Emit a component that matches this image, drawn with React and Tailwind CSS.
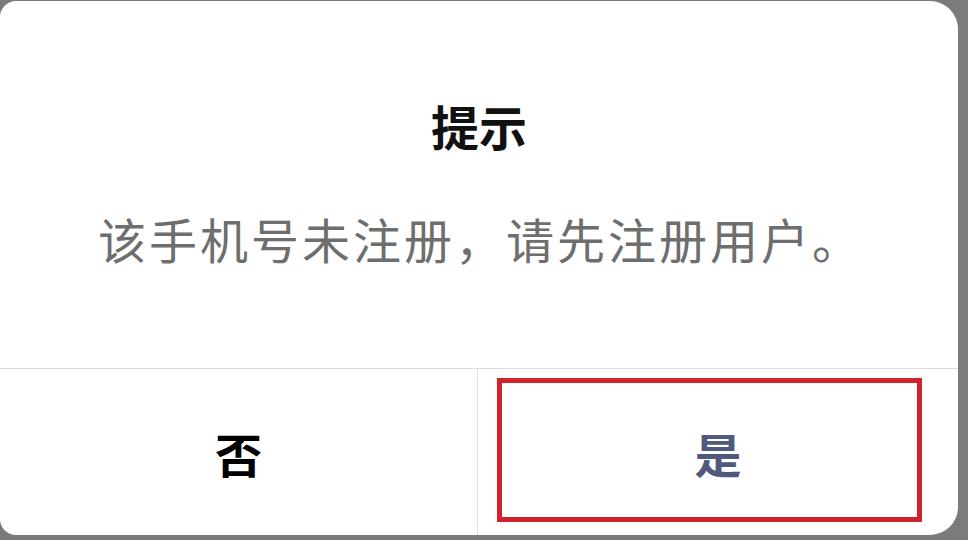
export default function App() {
  const font = { fontFamily: '"Noto Sans CJK SC", "Noto Sans", sans-serif' };
  return (
    <div className="w-[968px] h-[540px] bg-[#7b7b7b] pt-[1px] pr-[10px] pb-[5px]" style={font}>
      <div className="w-[958px] h-[534px] bg-white rounded-tl-[16px] rounded-bl-[16px] rounded-tr-[28px] rounded-br-[28px] flex flex-col overflow-hidden">
        <div className="h-[367px] flex flex-col items-center pt-[100px]">
          <div className="text-[48px] leading-[48px] font-bold text-[#111]">提示</div>
          <div className="mt-[64px] text-[48px] leading-[50px] text-[#6e6e6e] tracking-[3px] pl-[3px]">该手机号未注册，请先注册用户。</div>
        </div>
        <div className="flex-1 flex border-t border-[#dedede]">
          <div className="w-[478px] flex items-center justify-center border-r border-[#dedede]">
            <span className="text-[47px] font-bold text-black leading-none">否</span>
          </div>
          <div className="flex-1 relative flex items-center justify-center">
            <span className="text-[47px] font-bold text-[#4f5a7c] leading-none">是</span>
            <div className="absolute left-[19px] right-[36px] top-[9px] bottom-[13px] border-[5px] border-[#d0232e]"></div>
          </div>
        </div>
      </div>
    </div>
  );
}
